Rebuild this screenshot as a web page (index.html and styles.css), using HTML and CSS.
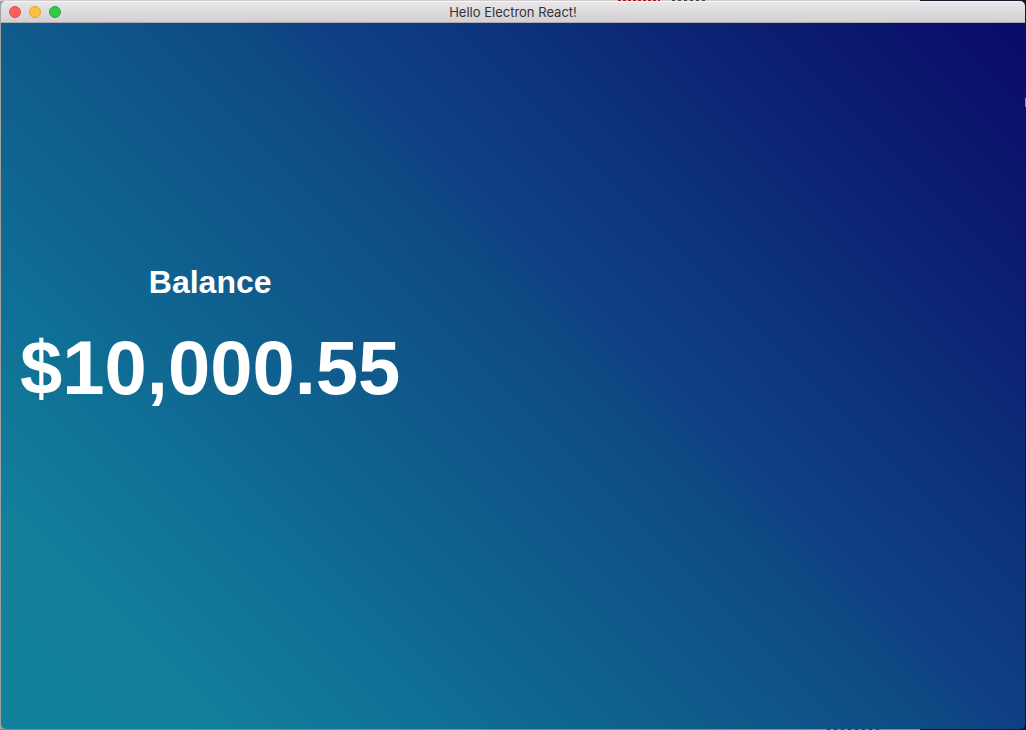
FILE: index.html
```html
<!DOCTYPE html>
<html lang="en">
<head>
<meta charset="utf-8">
<title>Hello Electron React!</title>
<link rel="stylesheet" href="styles.css">
</head>
<body class="desktop">
<div class="window">
  <header class="titlebar">
    <div class="controls">
      <button class="control control-close" type="button" aria-label="Close"></button>
      <button class="control control-minimize" type="button" aria-label="Minimize"></button>
      <button class="control control-zoom" type="button" aria-label="Zoom"></button>
    </div>
    <span class="title">Hello Electron React!</span>
  </header>
  <main class="content">
    <section class="balance">
      <h2 class="balance-label">Balance</h2>
      <h1 class="balance-amount">$10,000.55</h1>
    </section>
  </main>
</div>
</body>
</html>
```
FILE: styles.css
```css
* {
  box-sizing: border-box;
}

.desktop {
  margin: 0;
  min-height: 100vh;
  padding: 1px;
  display: flex;
  /* strips of the windows that lie behind the app */
  background:
    linear-gradient(#8b8f98, #8b8f98) 100% 98px / 1px 9px no-repeat,
    repeating-linear-gradient(90deg, #b01818 0 3px, #d8c8c8 3px 5px) 618px 0 / 42px 1px no-repeat,
    repeating-linear-gradient(90deg, #444444 0 3px, #cccccc 3px 6px) 672px 0 / 36px 1px no-repeat,
    repeating-linear-gradient(90deg, #33363c 0 3px, #85878c 3px 7px) 827px 100% / 56px 1px no-repeat,
    linear-gradient(#d0ced0, #d0ced0) 0 0 / 920px 1px no-repeat,
    linear-gradient(#85878c, #85878c) 0 100% / 920px 1px no-repeat,
    linear-gradient(#a3a0a2, #a3a0a2) 0 0 / 8px 100% no-repeat,
    #161a28;
}

.window {
  flex: 1;
  display: flex;
  flex-direction: column;
  border-radius: 5px;
  overflow: hidden;
}

.titlebar {
  display: grid;
  grid-template-columns: 1fr auto 1fr;
  align-items: center;
  height: 22px;
  padding: 0 8px;
  background: linear-gradient(#e9e6e9, #d2d0d2);
  border-top: 1px solid #f6f4f6;
  border-bottom: 1px solid #aeacae;
}

.controls {
  display: flex;
  gap: 8px;
}

.control {
  width: 12px;
  height: 12px;
  padding: 0;
  border: 1px solid;
  border-radius: 50%;
}

.control-close {
  background: #ff5f5b;
  border-color: #e2504c;
}

.control-minimize {
  background: #ffbe3f;
  border-color: #e0a134;
}

.control-zoom {
  background: #33c94b;
  border-color: #27ae36;
}

.title {
  font: 13px/20px Inter, sans-serif;
  color: #343234;
}

.content {
  flex: 1;
  display: flex;
  align-items: center;
  padding: 0 19px 80px;
  color: #ffffff;
  font-family: "Liberation Sans", Arial, sans-serif;
  background: linear-gradient(45deg, #12829c 0%, #12809b 12%, #0f6c94 28%, #0f5b8c 41%, #0e4b82 54%, #0f4184 58%, #0d347c 69%, #0c2474 80%, #0a136d 93%, #0a0a67 100%);
}

.balance {
  text-align: center;
}

.balance-label {
  margin: 0 0 24px;
  font-size: 32px;
  line-height: 40px;
}

.balance-amount {
  margin: 0;
  font-size: 76px;
  line-height: 84px;
}
```
